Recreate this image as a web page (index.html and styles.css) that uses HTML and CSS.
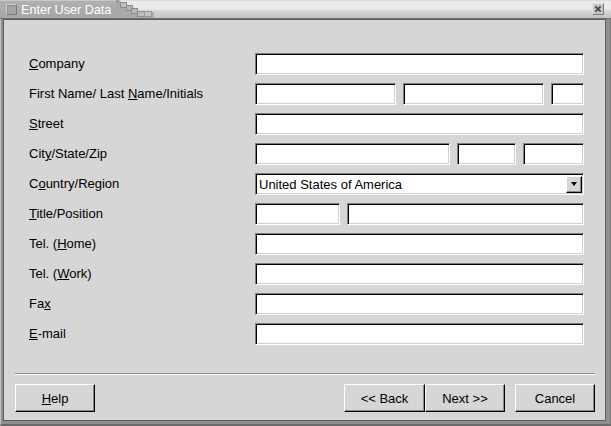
FILE: index.html
```html
<!DOCTYPE html>
<html lang="en">
<head>
<meta charset="utf-8">
<title>Enter User Data</title>
<link rel="stylesheet" href="styles.css">
</head>
<body>
<div class="window">
  <div class="titlebar">
    <div class="title-left">
      <span class="win-icon"></span>
      <span class="title-text">Enter User Data</span>
    </div>
    <svg class="title-steps" width="38" height="18" viewBox="0 0 38 18">
      <polygon points="0,0 3,0 6,3 12,6 17,9 23,12 38,12 38,18 0,18" fill="#a9a9a9"/>
      <rect x="0.5" y="0.5" width="2" height="2" fill="#8a8a8a"/>
      <rect x="4.5" y="2.5" width="6" height="5" fill="#bdbdbd" stroke="#8c8c8c"/>
      <rect x="10.5" y="5.5" width="6" height="5" fill="#b4b4b4" stroke="#8c8c8c"/>
      <rect x="15.5" y="8.5" width="6" height="5" fill="#b8b8b8" stroke="#8c8c8c"/>
      <rect x="21.5" y="11.5" width="7" height="5" fill="#bdbdbd" stroke="#8c8c8c"/>
      <rect x="28.5" y="11.5" width="7" height="5" fill="#c2c2c2" stroke="#9a9a9a"/>
    </svg>
    <div class="title-fill"></div>
    <span class="close-btn">
      <svg width="9" height="9" viewBox="0 0 9 9"><path d="M1.5 1.5 L7.5 7.5 M7.5 1.5 L1.5 7.5" stroke="#4a4a4a" stroke-width="2"/></svg>
    </span>
  </div>

  <div class="client">
    <form class="form">
      <label class="lbl"><u>C</u>ompany</label>
      <div class="fields"><input class="field grow" type="text"></div>

      <label class="lbl">First Name/ Last <u>N</u>ame/Initials</label>
      <div class="fields">
        <input class="field w141" type="text">
        <input class="field w141" type="text">
        <input class="field grow" type="text">
      </div>

      <label class="lbl"><u>S</u>treet</label>
      <div class="fields"><input class="field grow" type="text"></div>

      <label class="lbl">Cit<u>y</u>/State/Zip</label>
      <div class="fields">
        <input class="field w195" type="text">
        <input class="field w59" type="text">
        <input class="field grow" type="text">
      </div>

      <label class="lbl">C<u>o</u>untry/Region</label>
      <div class="fields">
        <div class="field combo">
          <span class="combo-text">United States of America</span>
          <span class="combo-btn"><span class="arrow"></span></span>
        </div>
      </div>

      <label class="lbl"><u>T</u>itle/Position</label>
      <div class="fields">
        <input class="field w85" type="text">
        <input class="field grow" type="text">
      </div>

      <label class="lbl">Tel. (<u>H</u>ome)</label>
      <div class="fields"><input class="field grow" type="text"></div>

      <label class="lbl">Tel. (<u>W</u>ork)</label>
      <div class="fields"><input class="field grow" type="text"></div>

      <label class="lbl">Fa<u>x</u></label>
      <div class="fields"><input class="field grow" type="text"></div>

      <label class="lbl"><u>E</u>-mail</label>
      <div class="fields"><input class="field grow" type="text"></div>
    </form>

    <div class="separator"></div>

    <div class="buttons">
      <button class="btn" type="button"><u>H</u>elp</button>
      <div class="spacer"></div>
      <button class="btn back" type="button">&lt;&lt; Back</button>
      <button class="btn" type="button">Next &gt;&gt;</button>
      <button class="btn cancel" type="button">Cancel</button>
    </div>
  </div>
</div>
</body>
</html>
```

FILE: styles.css
```css
* { box-sizing: border-box; }

html, body {
  margin: 0;
  padding: 0;
  width: 611px;
  height: 426px;
  overflow: hidden;
}

body {
  font-family: "Liberation Sans", Arial, sans-serif;
  font-size: 13px;
  color: #000;
}

.window {
  width: 611px;
  height: 426px;
  display: flex;
  flex-direction: column;
  background: #8e8e8e;
  border-left: 1px solid #c2c2c2;
  border-bottom: 2px solid #6a6a6a;
  border-right: 1px solid #7a7a7a;
}

/* title bar */
.titlebar {
  height: 19px;
  display: flex;
  align-items: stretch;
  border-bottom: 1px solid #6f6f6f;
  margin-left: -1px;
  margin-right: -1px;
}

.title-left {
  width: 116px;
  display: flex;
  align-items: center;
  background: linear-gradient(#c9c9c9 0, #c9c9c9 1px, #b0b0b0 1px, #a6a6a6 100%);
}

.win-icon {
  width: 11px;
  height: 11px;
  margin-left: 6px;
  background: #a4a4a4;
  border: 1px solid;
  border-color: #d0d0d0 #7c7c7c #7c7c7c #d0d0d0;
  box-shadow: inset 1px 1px 0 #8f8f8f;
}

.title-text {
  margin-left: 4px;
  color: #fff;
  font-size: 12.6px;
  line-height: 18px;
  padding-top: 1px;
}

.title-steps {
  display: block;
  flex: none;
  background: linear-gradient(#dcdcdc 0, #dcdcdc 1px, #ebebeb 1px, #ebebeb 9px, #dadada 10px, #cecece 14px, #c4c4c4 18px);
}

.title-fill {
  flex: 1;
  background: linear-gradient(#dcdcdc 0, #dcdcdc 1px, #ebebeb 1px, #ebebeb 9px, #dadada 10px, #cecece 14px, #c4c4c4 18px);
}

.close-btn {
  width: 19px;
  display: flex;
  align-items: center;
  justify-content: flex-start;
  background: linear-gradient(#dcdcdc 0, #dcdcdc 1px, #ebebeb 1px, #ebebeb 9px, #dadada 10px, #cecece 14px, #c4c4c4 18px);
}

.close-btn svg {
  display: block;
  width: 12px;
  height: 12px;
  padding: 1px;
  background: #c6c6c6;
  border: 1px solid;
  border-color: #e6e6e6 #7a7a7a #7a7a7a #e6e6e6;
}

/* client area */
.client {
  flex: 1;
  margin: 1px 5px 4px 3px;
  background: #d6d6d6;
  box-shadow: 0 0 0 1px #5c5c5c;
  display: flex;
  flex-direction: column;
}

.form {
  margin: 0;
  padding: 33px 21px 0 25px;
  display: grid;
  grid-template-columns: 226px 329px;
  grid-auto-rows: 22px;
  row-gap: 8px;
  align-items: center;
}

.lbl {
  line-height: 15px;
  padding-bottom: 1px;
  white-space: nowrap;
}

.fields {
  display: flex;
  gap: 7px;
  height: 22px;
}

.field {
  display: block;
  height: 22px;
  margin: 0;
  padding: 0 1px;
  background: #fff;
  border: 1px solid;
  border-color: #7e7e7e #fff #fff #7e7e7e;
  box-shadow: inset 1px 1px 0 #000, inset -1px -1px 0 #d0d0d0;
  font: inherit;
  outline: none;
}

.grow { flex: 1; min-width: 0; }
.w141 { width: 141px; }
.w195 { width: 195px; }
.w59 { width: 59px; }
.w85 { width: 85px; }

.combo {
  flex: 1;
  display: flex;
  align-items: stretch;
  padding: 2px 1px 1px 3px;
}

.combo-text {
  flex: 1;
  line-height: 18px;
}

.combo-btn {
  width: 16px;
  background: #d6d6d6;
  border: 1px solid;
  border-color: #fff #000 #000 #fff;
  box-shadow: inset -1px -1px 0 #8a8a8a;
  display: flex;
  align-items: center;
  justify-content: center;
}

.arrow {
  width: 0;
  height: 0;
  border-left: 3.5px solid transparent;
  border-right: 3.5px solid transparent;
  border-top: 4px solid #000;
  margin-top: -1px;
}

.separator {
  margin: 28px 10px 0 11px;
  height: 2px;
  border-top: 1px solid #8e8e8e;
  border-bottom: 1px solid #fff;
}

.buttons {
  display: flex;
  padding: 9px 10px 0 11px;
}

.spacer { flex: 1; }

.btn {
  width: 80px;
  height: 28px;
  margin: 0;
  padding: 0;
  background: #d6d6d6;
  border: 1px solid;
  border-color: #fff #000 #000 #fff;
  box-shadow: inset -1px -1px 0 #8a8a8a;
  font: inherit;
  color: #000;
  text-align: center;
}

.btn.back { width: 81px; }
.btn.cancel { margin-left: 10px; }
```
